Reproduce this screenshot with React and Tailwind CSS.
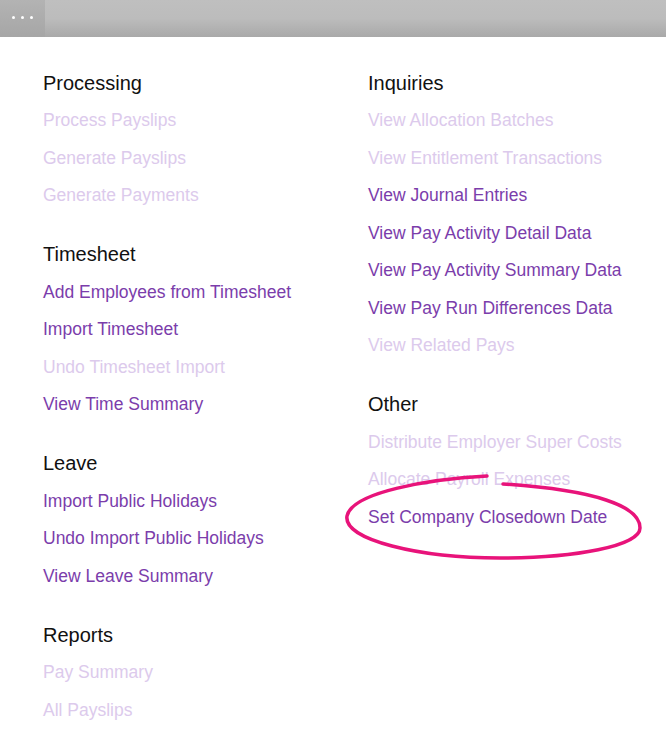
const left = [
  {
    title: "Processing",
    items: [
      ["Process Payslips", false],
      ["Generate Payslips", false],
      ["Generate Payments", false],
    ],
  },
  {
    title: "Timesheet",
    items: [
      ["Add Employees from Timesheet", true],
      ["Import Timesheet", true],
      ["Undo Timesheet Import", false],
      ["View Time Summary", true],
    ],
  },
  {
    title: "Leave",
    items: [
      ["Import Public Holidays", true],
      ["Undo Import Public Holidays", true],
      ["View Leave Summary", true],
    ],
  },
  {
    title: "Reports",
    items: [
      ["Pay Summary", false],
      ["All Payslips", false],
    ],
  },
]

const right = [
  {
    title: "Inquiries",
    items: [
      ["View Allocation Batches", false],
      ["View Entitlement Transactions", false],
      ["View Journal Entries", true],
      ["View Pay Activity Detail Data", true],
      ["View Pay Activity Summary Data", true],
      ["View Pay Run Differences Data", true],
      ["View Related Pays", false],
    ],
  },
  {
    title: "Other",
    items: [
      ["Distribute Employer Super Costs", false],
      ["Allocate Payroll Expenses", false],
      ["Set Company Closedown Date", true],
    ],
  },
]

function Section({ section }) {
  return (
    <div className="mb-[21.5px]">
      <div className="h-[37.5px] leading-[37.5px] text-[20px] text-[#111]">{section.title}</div>
      {section.items.map(([label, enabled]) => (
        <div
          key={label}
          className={`h-[37.5px] leading-[37.5px] text-[17.5px] whitespace-nowrap ${
            enabled ? "text-[#7b3dab]" : "text-[#dccaec]"
          }`}
        >
          {label}
        </div>
      ))}
    </div>
  )
}

export default function App() {
  return (
    <div className="relative w-[666px] h-[742px] bg-white overflow-hidden font-['Liberation_Sans',Arial,sans-serif]">
      <div className="flex h-[37px] bg-gradient-to-b from-[#bfbfbf] via-[#bcbcbc] to-[#a9a9a9]">
        <div className="flex w-[45px] items-center justify-center gap-[6px] bg-gradient-to-b from-[#b3b3b3] to-[#a6a6a6] pb-[2px]">
          <span className="w-[3px] h-[3px] rounded-full bg-white" />
          <span className="w-[3px] h-[3px] rounded-full bg-white" />
          <span className="w-[3px] h-[3px] rounded-full bg-white" />
        </div>
      </div>

      <div className="grid grid-cols-[325px_1fr] pl-[43px] pt-[27.5px]">
        <div>
          {left.map((s) => (
            <Section key={s.title} section={s} />
          ))}
        </div>
        <div>
          {right.map((s) => (
            <Section key={s.title} section={s} />
          ))}
        </div>
      </div>

      {/* hand-drawn highlight */}
      <svg className="absolute left-0 top-0 pointer-events-none" width="666" height="742">
        <path
          d="M487 476 C430 479 352 492 347 516 C343 540 420 558 500 558 C575 558 640 546 640 528 C640 506 595 490 503 484"
          fill="none"
          stroke="#e8137a"
          strokeWidth="3.5"
          strokeLinecap="round"
        />
      </svg>
    </div>
  )
}
